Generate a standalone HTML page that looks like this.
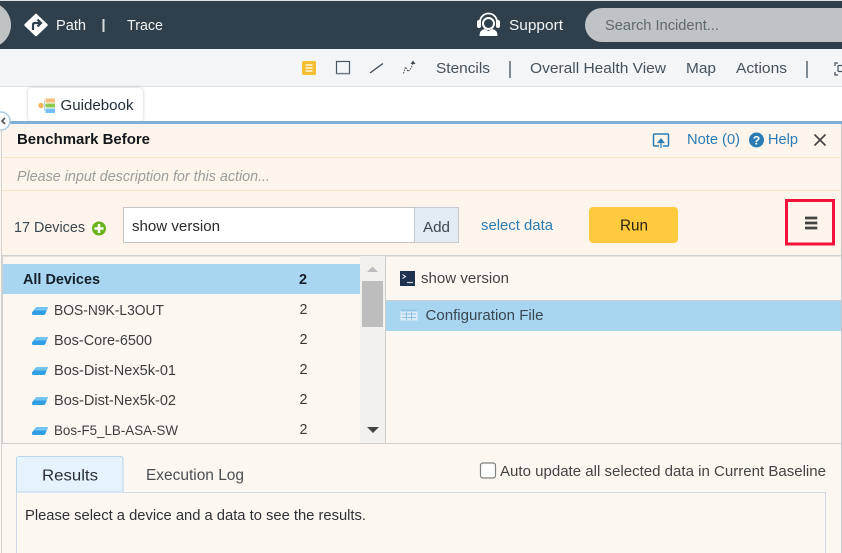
<!DOCTYPE html>
<html><head><meta charset="utf-8"><style>
html,body{margin:0;padding:0;width:842px;height:553px;overflow:hidden;background:#fdf6ef}
svg{display:block}
text{font-family:"Liberation Sans",sans-serif;font-size:14.5px;fill:#3a3a3a}
</style></head><body>
<svg width="842" height="553" viewBox="0 0 842 553" xmlns="http://www.w3.org/2000/svg">
<defs>
<g id="dev">
<path d="M32 312.500l3.500-4.500q.7-1 2-1H48l-2.500 6.500q-.5 1.500-2 1.500H33.500q-2 0-1.500-2.500Z" fill="#2f9ee2"/>
<path d="M34.500 309.500l1.500-1.500q.7-1 2-1H48l-1.200 3.500h-12.500Z" fill="#74c4f0"/>
</g>
</defs>
<rect width="842" height="553" fill="#fcf7f1"/>
<!-- top bar -->
<rect width="842" height="1" fill="#dfe2e4"/>
<rect y="1" width="842" height="48" fill="#2f3f4b"/>
<circle cx="-12" cy="25" r="23" fill="#c0c3c4"/>
<path d="M36 15 L46.500 25 L36 35 L25.500 25Z" fill="#fff" stroke="#fff" stroke-width="2.500" stroke-linejoin="round"/>
<path d="M33 30v-5q0-2 2-2h5M37.500 19.500 41 23l-3.500 3.500" fill="none" stroke="#2f3f4b" stroke-width="2.200"/>
<text x="56" y="30" textLength="30" lengthAdjust="spacingAndGlyphs" style="fill:#f2f4f5">Path</text>
<rect x="102.500" y="19" width="2" height="13" fill="#d8dcdf"/>
<text x="127" y="30" textLength="36" lengthAdjust="spacingAndGlyphs" style="fill:#f2f4f5">Trace</text>
<!-- support icon -->
<path d="M480 24v-2a8.500 8.500 0 0 1 17 0v2" fill="none" stroke="#fff" stroke-width="1.800"/>
<rect x="477" y="20" width="4" height="8" rx="2" fill="#fff"/>
<rect x="496" y="20" width="4" height="8" rx="2" fill="#fff"/>
<circle cx="488.500" cy="23.500" r="5.500" fill="none" stroke="#fff" stroke-width="2"/>
<path d="M479.500 36q0-6 5-7l4 2 4-2q5 1 5 7Z" fill="#fff"/>
<text x="509" y="30" textLength="54" lengthAdjust="spacingAndGlyphs" style="fill:#f2f4f5">Support</text>
<rect x="585" y="8" width="300" height="34" rx="17" fill="#bfc3c5"/>
<text x="605" y="30" textLength="114" lengthAdjust="spacingAndGlyphs" style="fill:#5f6a70">Search Incident...</text>
<!-- toolbar -->
<rect y="49" width="842" height="37" fill="#f3f5f7"/>
<rect y="86" width="842" height="1" fill="#dce2e7"/>
<rect x="302" y="61" width="14" height="14" rx="1.500" fill="#f4c02f"/>
<path d="M305.500 65h7M305.500 68h7M305.500 71h7" stroke="#fff" stroke-width="1.200"/>
<rect x="336.500" y="61.500" width="13" height="12" fill="none" stroke="#4a5660" stroke-width="1.200"/>
<rect x="336" y="73.500" width="14" height="1" fill="#9aa3aa"/>
<path d="M370 73 L383 63.500" stroke="#3f4a53" stroke-width="1.300"/>
<path d="M403.500 73.500 L405.500 67 L408 71.500 L410.500 69 L413 64" fill="none" stroke="#4a5660" stroke-width="1" stroke-dasharray="1.500 1"/>
<path d="M413 60.500l2.500 3.500h-5Z" fill="#3f4a53"/>
<text x="436" y="73" textLength="54" lengthAdjust="spacingAndGlyphs" style="fill:#45525c">Stencils</text>
<rect x="509" y="61" width="2" height="17" fill="#7f8a92"/>
<text x="530" y="73" textLength="136" lengthAdjust="spacingAndGlyphs" style="fill:#45525c">Overall Health View</text>
<text x="686" y="73" textLength="30" lengthAdjust="spacingAndGlyphs" style="fill:#45525c">Map</text>
<text x="736" y="73" textLength="51" lengthAdjust="spacingAndGlyphs" style="fill:#45525c">Actions</text>
<rect x="806" y="61" width="2" height="17" fill="#7f8a92"/>
<path d="M838 63h-3v3M835 72v3h3" fill="none" stroke="#4a5660" stroke-width="1.300"/>
<rect x="838" y="65.500" width="5" height="6" rx="1" fill="none" stroke="#4a5660" stroke-width="1.200"/>
<!-- guidebook band -->
<rect y="87" width="842" height="34" fill="#fff"/>
<rect x="28" y="88" width="115" height="33" rx="4" fill="#fff" style="filter:drop-shadow(0 0 1.500px rgba(0,0,0,.22))"/>
<circle cx="41" cy="105.500" r="2.700" fill="#f8b45c"/>
<path d="M43 105.500h2.500M44.500 100v11" stroke="#bcd3e6" stroke-width="1"/>
<rect x="45.500" y="98.500" width="9.500" height="4" fill="#f9bd7c"/>
<rect x="45.500" y="103.500" width="9.500" height="4" fill="#8cc950"/>
<rect x="45.500" y="108.500" width="9.500" height="4.500" fill="#74c0f2"/>
<text x="60.500" y="110" textLength="73" lengthAdjust="spacingAndGlyphs" style="fill:#23303a">Guidebook</text>
<!-- blue line & panel -->
<rect y="121" width="842" height="3" fill="#80afd6"/>
<rect y="124" width="842" height="132" fill="#fdf5ec"/>
<rect x="1" y="124" width="1" height="429" fill="#d2d2d2"/>
<rect x="841" y="124" width="1" height="429" fill="#c9c9c9"/>
<circle cx="1" cy="121" r="9" fill="#fff" stroke="#a9cbe6" stroke-width="1.500"/>
<path d="M5 118l-3 3 3 3" fill="none" stroke="#555" stroke-width="1.700"/>
<text x="17" y="144" font-weight="700" textLength="133" lengthAdjust="spacingAndGlyphs" style="fill:#14181c">Benchmark Before</text>
<!-- share icon -->
<path d="M659 146h-4.500q-1 0-1-1v-10q0-1 1-1h13q1 0 1 1v10q0 1-1 1h-4.500" fill="none" stroke="#2b7cb5" stroke-width="1.500"/>
<path d="M661 148v-8M658.200 142.500l2.800-3.500 2.800 3.500Z" fill="#2b7cb5" stroke="#2b7cb5" stroke-width="1.200"/>
<text x="687" y="144" textLength="53" lengthAdjust="spacingAndGlyphs" style="fill:#2b7cb5">Note (0)</text>
<circle cx="756.500" cy="140" r="7.500" fill="#2b7cb5"/>
<text x="756.500" y="144.500" text-anchor="middle" font-weight="700" style="font-size:12px;fill:#fff">?</text>
<text x="768" y="144" textLength="30" lengthAdjust="spacingAndGlyphs" style="fill:#2b7cb5">Help</text>
<path d="M814.500 134.500l11 11M825.500 134.500l-11 11" stroke="#444" stroke-width="1.700"/>
<rect x="2" y="157" width="839" height="1" fill="#fbe3c6"/>
<text x="17" y="181" font-style="italic" textLength="253" lengthAdjust="spacingAndGlyphs" style="fill:#9b9b9b">Please input description for this action...</text>
<rect x="2" y="190" width="839" height="1" fill="#fbe3c6"/>
<text x="14" y="232" textLength="71" lengthAdjust="spacingAndGlyphs" style="fill:#3a4650">17 Devices</text>
<circle cx="99" cy="228.500" r="7" fill="#69b41c"/>
<path d="M99 224v9M94.500 228.500h9" stroke="#fff" stroke-width="2.500"/>
<rect x="123.500" y="207.500" width="291" height="35" fill="#fff" stroke="#c4c4c4"/>
<text x="132" y="231" textLength="88" lengthAdjust="spacingAndGlyphs" style="fill:#2a2a2a">show version</text>
<rect x="414.500" y="207.500" width="44" height="35" fill="#e3ebf3" stroke="#c4cbd2"/>
<text x="423" y="232" textLength="27" lengthAdjust="spacingAndGlyphs" style="fill:#3a4650">Add</text>
<text x="481" y="230" textLength="72" lengthAdjust="spacingAndGlyphs" style="fill:#2b7cb5">select data</text>
<rect x="589" y="207" width="89" height="36" rx="4" fill="#ffcb3e"/>
<text x="620" y="230.500" textLength="28" lengthAdjust="spacingAndGlyphs" style="font-size:15.500px;fill:#2a2312">Run</text>
<rect x="786.500" y="200.500" width="47" height="43.500" fill="none" stroke="#f1123b" stroke-width="3"/>
<path d="M805 218h12.300M805 223h12.300M805 228h12.300" stroke="#444" stroke-width="2.700"/>
<!-- lists -->
<rect x="2" y="255" width="839" height="1.500" fill="#cfcfcf"/>
<rect x="2" y="256" width="1" height="188" fill="#cfcfcf"/>
<rect x="3" y="443" width="838" height="1" fill="#cfcfcf"/>
<rect x="3" y="264" width="357" height="30" fill="#a8d6f1"/>
<text x="23" y="284" font-weight="700" textLength="77" lengthAdjust="spacingAndGlyphs" style="fill:#17202a">All Devices</text>
<text x="299" y="284" font-weight="700" textLength="8" lengthAdjust="spacingAndGlyphs" style="fill:#17202a">2</text>
<use href="#dev"/>
<text x="54" y="315" textLength="110" lengthAdjust="spacingAndGlyphs" style="fill:#3e3e3e">BOS-N9K-L3OUT</text>
<text x="299.500" y="314" textLength="8" lengthAdjust="spacingAndGlyphs">2</text>
<use href="#dev" y="30"/>
<text x="54" y="345" textLength="98" lengthAdjust="spacingAndGlyphs" style="fill:#3e3e3e">Bos-Core-6500</text>
<text x="299.500" y="344" textLength="8" lengthAdjust="spacingAndGlyphs">2</text>
<use href="#dev" y="60"/>
<text x="54" y="375" textLength="122" lengthAdjust="spacingAndGlyphs" style="fill:#3e3e3e">Bos-Dist-Nex5k-01</text>
<text x="299.500" y="374" textLength="8" lengthAdjust="spacingAndGlyphs">2</text>
<use href="#dev" y="90"/>
<text x="54" y="405" textLength="122" lengthAdjust="spacingAndGlyphs" style="fill:#3e3e3e">Bos-Dist-Nex5k-02</text>
<text x="299.500" y="404" textLength="8" lengthAdjust="spacingAndGlyphs">2</text>
<use href="#dev" y="120"/>
<text x="54" y="435" textLength="124" lengthAdjust="spacingAndGlyphs" style="fill:#3e3e3e;font-size:14px">Bos-F5_LB-ASA-SW</text>
<text x="299.500" y="434" textLength="8" lengthAdjust="spacingAndGlyphs">2</text>
<!-- scrollbar -->
<rect x="360" y="256" width="25" height="187" fill="#f3f1ee"/>
<path d="M372.500 266.500l5.500 5.500h-11Z" fill="#bdbdbd"/>
<rect x="362" y="281" width="21" height="46" fill="#bdbdbd"/>
<path d="M367 427h12l-6 6Z" fill="#444"/>
<rect x="385" y="256" width="1" height="187" fill="#cfcfcf"/>
<!-- right pane -->
<rect x="400" y="271" width="15" height="15" fill="#1f3350"/>
<path d="M402.500 274.500l3 2-3 2" fill="none" stroke="#fff" stroke-width="1"/>
<path d="M407 282.500h6" stroke="#cfd6dd" stroke-width="1.200"/>
<text x="421" y="283" textLength="88" lengthAdjust="spacingAndGlyphs" style="fill:#444">show version</text>
<rect x="386" y="300" width="455" height="1" fill="#cfcfcf"/>
<rect x="386" y="301" width="455" height="30" fill="#a8d6f1"/>
<rect x="400.500" y="310.500" width="17" height="10" fill="#dcecf8" stroke="#c2e0f4"/>
<path d="M402 314h14M402 317.500h14M406.500 312v8M411.500 312v8" stroke="#8fc2e6" stroke-width="1"/>
<rect x="401" y="309.500" width="16" height="2" fill="#93c7ea"/>
<text x="425.500" y="320" textLength="118" lengthAdjust="spacingAndGlyphs" style="fill:#3a4650">Configuration File</text>
<!-- tabs -->
<path d="M16.500 492v-33q0-2.500 2.500-2.500h101.500q2.500 0 2.500 2.500v33Z" fill="#e5f3fc" stroke="#b9d6ec"/>
<text x="42" y="480.500" textLength="56" lengthAdjust="spacingAndGlyphs" style="font-size:15.500px;fill:#2a2f35">Results</text>
<text x="146" y="480" textLength="98" lengthAdjust="spacingAndGlyphs" style="font-size:15.500px;fill:#4a4e53">Execution Log</text>
<rect x="480.500" y="463" width="15" height="15" rx="2.500" fill="#fff" stroke="#7f7f7f" stroke-width="1.200"/>
<text x="500" y="476" textLength="326" lengthAdjust="spacingAndGlyphs" style="fill:#444">Auto update all selected data in Current Baseline</text>
<path d="M123 492.500H825.500V553M16.500 492V553" fill="none" stroke="#cdd9e7"/>
<text x="25" y="520" textLength="341" lengthAdjust="spacingAndGlyphs" style="fill:#2f2f36">Please select a device and a data to see the results.</text>
</svg>
</body></html>
